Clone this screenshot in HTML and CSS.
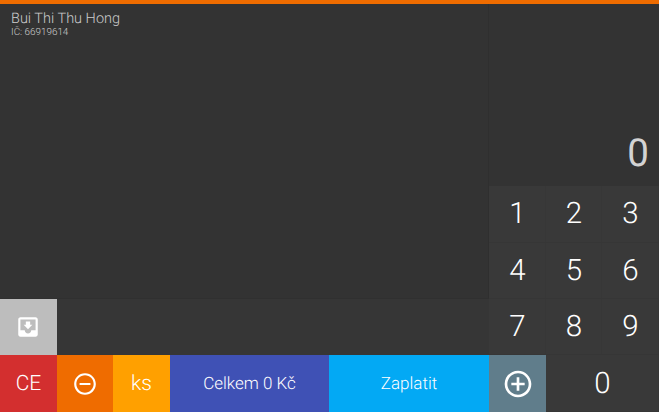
FILE: index.html
```html
<!DOCTYPE html>
<html lang="cs">
<head>
<meta charset="utf-8">
<title>Pokladna</title>
<link rel="stylesheet" href="styles.css">
</head>
<body>
<div class="app">
  <main class="sale">
    <header class="receipt">
      <div class="name"><span>Bui Thi Thu Hong</span></div>
      <div class="company-id"><span>IČ: 66919614</span></div>
    </header>
    <div class="shelf">
      <button class="park" aria-label="Odložit">
        <svg width="26" height="26" viewBox="0 0 24 24"><path d="M19 3H4.99c-1.11 0-1.98.9-1.98 2L3 19c0 1.1.88 2 1.99 2H19c1.1 0 2-.9 2-2V5c0-1.1-.9-2-2-2zm0 12h-4c0 1.66-1.35 3-3 3s-3-1.34-3-3H4.99V5H19v10zm-3-5h-2V7h-4v3H8l4 4 4-4z"/></svg>
      </button>
    </div>
    <div class="actions">
      <button class="clear"><span>CE</span></button>
      <button class="minus" aria-label="Minus">
        <svg width="26" height="26" viewBox="0 0 24 24"><path d="M7 11v2h10v-2H7zm5-9C6.48 2 2 6.48 2 12s4.48 10 10 10 10-4.48 10-10S17.52 2 12 2zm0 18c-4.41 0-8-3.59-8-8s3.59-8 8-8 8 3.59 8 8-3.59 8-8 8z"/></svg>
      </button>
      <button class="pieces"><span>ks</span></button>
      <button class="total"><span>Celkem 0 Kč</span></button>
      <button class="pay"><span>Zaplatit</span></button>
    </div>
  </main>
  <aside class="pad">
    <output class="display"><span>0</span></output>
    <div class="keys">
      <button>1</button><button>2</button><button>3</button>
      <button>4</button><button>5</button><button>6</button>
      <button>7</button><button>8</button><button>9</button>
      <button class="plus" aria-label="Plus">
        <svg width="32" height="32" viewBox="0 0 24 24"><path d="M13 7h-2v4H7v2h4v4h2v-4h4v-2h-4V7zm-1-5C6.48 2 2 6.48 2 12s4.48 10 10 10 10-4.48 10-10S17.52 2 12 2zm0 18c-4.41 0-8-3.59-8-8s3.59-8 8-8 8 3.59 8 8-3.59 8-8 8z"/></svg>
      </button>
      <button class="zero">0</button>
    </div>
  </aside>
</div>
</body>
</html>
```
FILE: styles.css
```css
* { box-sizing: border-box; }
body {
  margin: 0;
  background: #333;
  color: #fff;
  font-family: Roboto, "Liberation Sans", sans-serif;
  font-weight: 300;
  text-rendering: geometricPrecision;
}
.app {
  display: grid;
  grid-template-columns: 489px 170px;
  height: 412px;
  border-top: 4px solid #ef6c00;
  overflow: hidden;
}
button {
  display: flex;
  align-items: center;
  justify-content: center;
  border: 0;
  padding: 0;
  margin: 0;
  background: none;
  color: inherit;
  font: inherit;
  text-rendering: inherit;
}
svg { display: block; fill: #fff; }
.sale {
  display: grid;
  grid-template-rows: 1fr 57px 57px;
  min-width: 0;
}
.receipt { padding: 6px 11px; color: #ccc; border-right: 1px solid #2f2f2f; }
.name { font-size: 14.5px; line-height: 17px; }
.company-id { font-size: 9.9px; line-height: 11px; }
.shelf { display: flex; background: #363636; border-top: 1px solid #303030; }
.park { width: 57px; background: #bdbdbd; padding-right: 1px; }
.actions {
  display: grid;
  grid-template-columns: 57px 56px 57px 159px 160px;
  font-size: 17px;
}
.clear { background: #d32f2f; font-size: 21px; }
.minus { background: #ef6c00; }
.pieces { background: #ffa000; font-size: 21px; }
.actions .clear, .actions .pieces { line-height: 24px; }
.total { background: #3f51b5; }
.pay { background: #03a9f4; }
.total span, .pay span { line-height: 20px; }
.pad { display: grid; grid-template-rows: 182px 226px; }
.display {
  display: flex;
  align-items: flex-end;
  justify-content: flex-end;
  padding: 0 10px 9px 0;
  color: #d3d3d3;
  font-size: 38.5px;
  line-height: 46px;
  font-weight: 400;
}
.keys {
  display: grid;
  grid-template-columns: 57px 56px 57px;
  grid-template-rows: 57px 56px 56px 57px;
  background: #393939;
  font-size: 29.5px;
  line-height: 36px;
}
.keys button {
  padding-left: 1px;
  border-right: 1px solid #373737;
  border-bottom: 1px solid #363636;
}
.keys button:nth-child(n+4) { padding-top: 1px; }
.keys .plus:nth-child(n) { padding: 0; background: #607d8b; border: 0; }
.keys .zero:nth-child(n) { grid-column: span 2; padding-top: 2px; }
```
